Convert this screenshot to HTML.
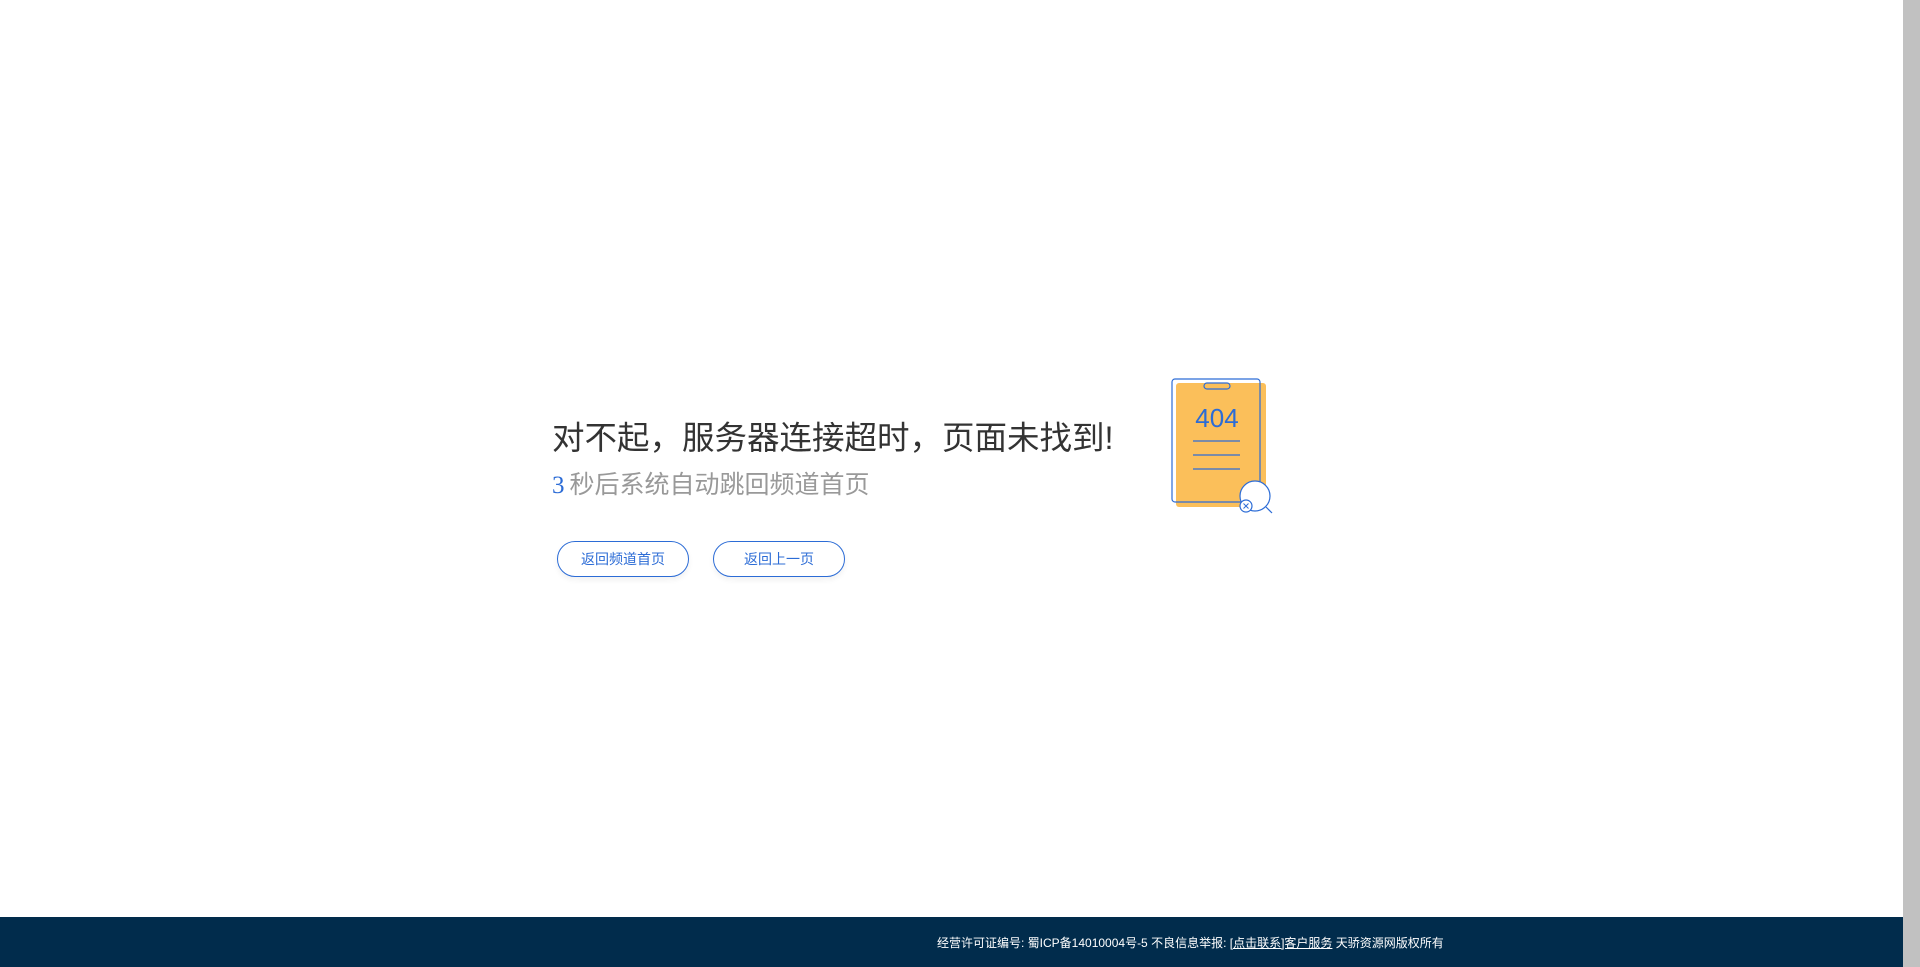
<!DOCTYPE html>
<html><head><meta charset="utf-8"><style>
html,body{margin:0;padding:0;width:1920px;height:967px;overflow:hidden;background:#fff;font-family:"Liberation Sans","Noto Sans CJK SC",sans-serif;}
.sb{position:absolute;right:0;top:0;width:17px;height:967px;background:#c1c1c1;}
.t1{position:absolute;left:552px;top:416px;font-size:32.5px;color:#333;white-space:nowrap;line-height:44px;}
.t2{position:absolute;left:552px;top:468px;font-size:25px;color:#999;white-space:nowrap;line-height:34px;}
.t2 b{font-weight:normal;color:#2c6cd6;font-family:"Liberation Serif",serif;margin-right:5px;}
.btn{position:absolute;top:541px;width:130px;height:34px;border:1px solid #2c6cd6;border-radius:18px;color:#2c6cd6;font-size:14px;text-align:center;line-height:34px;box-shadow:0 3px 6px rgba(0,0,0,0.06);}
.ft{position:absolute;left:0;top:917px;width:1903px;height:50px;background:#012c4c;}
.ft div{position:absolute;left:937px;top:17px;font-size:12px;color:#fff;white-space:nowrap;}
.ft u{color:#fff;}
</style></head><body>
<div class="t1">对不起，服务器连接超时，页面未找到!</div>
<div class="t2"><b>3</b>秒后系统自动跳回频道首页</div>
<div class="btn" style="left:557px">返回频道首页</div>
<div class="btn" style="left:713px">返回上一页</div>
<svg style="position:absolute;left:1170px;top:376px" width="106" height="140" viewBox="0 0 106 140">
<rect x="6" y="7" width="90" height="124" rx="3" fill="#fbbf5a"/>
<rect x="2" y="3" width="88" height="123" rx="3" fill="none" stroke="#2c6cd6" stroke-width="1.2"/>
<rect x="34" y="7" width="26" height="6" rx="3" fill="none" stroke="#2c6cd6" stroke-width="1.2"/>
<text x="47" y="51" text-anchor="middle" font-size="26" fill="#2c6cd6" font-family="Liberation Sans,sans-serif">404</text>
<line x1="23" y1="65" x2="70" y2="65" stroke="#2c6cd6" stroke-width="1.2"/>
<line x1="23" y1="79" x2="70" y2="79" stroke="#2c6cd6" stroke-width="1.2"/>
<line x1="23" y1="93" x2="70" y2="93" stroke="#2c6cd6" stroke-width="1.2"/>
<circle cx="85" cy="120" r="15" fill="#fff" stroke="#2c6cd6" stroke-width="1.2"/>
<line x1="96" y1="131" x2="102" y2="137" stroke="#2c6cd6" stroke-width="1.2"/>
<circle cx="76" cy="130" r="6" fill="#fff" stroke="#2c6cd6" stroke-width="1.2"/>
<path d="M73.5 127.5l5 5M78.5 127.5l-5 5" stroke="#2c6cd6" stroke-width="1"/>
</svg>
<div class="ft"><div>经营许可证编号: 蜀ICP备14010004号-5 不良信息举报: <u>[点击联系]客户服务</u> 天骄资源网版权所有</div></div>
<div class="sb"></div>
</body></html>
